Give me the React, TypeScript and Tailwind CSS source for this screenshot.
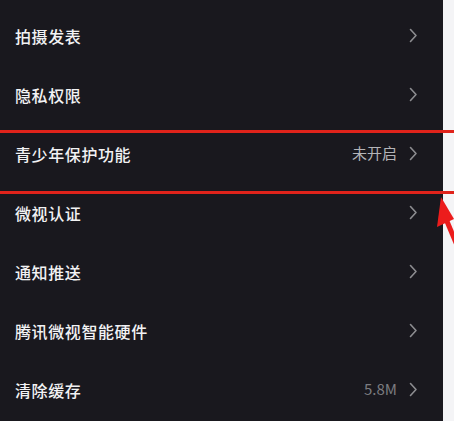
import React from 'react';

interface SettingRow {
  label: string;
  value?: string;
  valueClass?: string;
}

const rows: SettingRow[] = [
  { label: '拍摄发表' },
  { label: '隐私权限' },
  { label: '青少年保护功能', value: '未开启', valueClass: 'text-[#b4b4b8]' },
  { label: '微视认证' },
  { label: '通知推送' },
  { label: '腾讯微视智能硬件' },
  { label: '清除缓存', value: '5.8M', valueClass: 'text-[#7c7c80]' },
];

function Chevron() {
  return (
    <svg width="9" height="15" viewBox="0 0 9 15" fill="none" className="shrink-0">
      <path d="M1.5 1.5 L7 7.5 L1.5 13.5" stroke="#8c8c90" strokeWidth="1.6" strokeLinecap="round" strokeLinejoin="round" />
    </svg>
  );
}

export default function App() {
  return (
    <div
      className="relative flex w-[454px] h-[421px] overflow-hidden"
      style={{ fontFamily: '"Noto Sans CJK SC", "Noto Sans", sans-serif' }}
    >
      <div className="w-[443px] bg-[#19181e] pt-[6px]">
        {rows.map((row) => (
          <div key={row.label} className="flex items-center h-[59px] pl-[15px] pr-[25px]">
            <span className="flex-1 text-[16px] font-medium text-[#f2f2f4] tracking-[0.6px]">{row.label}</span>
            {row.value && (
              <span className={`text-[15px] mr-[12px] ${row.valueClass}`}>{row.value}</span>
            )}
            <Chevron />
          </div>
        ))}
      </div>
      <div className="flex-1 bg-[#f4f4f6]" />

      {/* red annotation lines */}
      <div className="absolute left-0 top-[130px] w-full h-[3px] bg-[#e0231b]" />
      <div className="absolute left-0 top-[191px] w-full h-[3px] bg-[#e0231b]" />

      {/* red arrow */}
      <svg className="absolute left-[436px] top-[195px]" width="18" height="60" viewBox="0 0 18 60">
        <line x1="10" y1="24" x2="26" y2="62" stroke="#ec1c1c" strokeWidth="5" />
        <polygon points="5,2 18,24 1,32" fill="#ec1c1c" />
      </svg>
    </div>
  );
}
